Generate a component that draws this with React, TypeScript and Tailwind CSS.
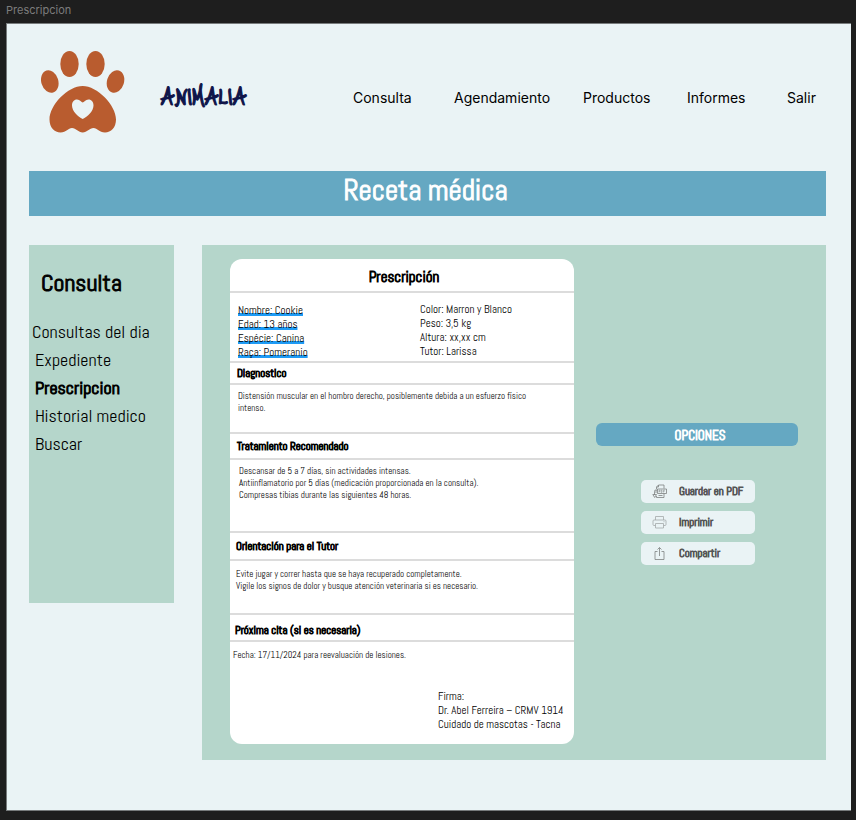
import type { ReactNode } from "react";

const navLinks = ["Consulta", "Agendamiento", "Productos", "Informes", "Salir"];

const menu = ["Consultas del dia", "Expediente", "Prescripcion", "Historial medico", "Buscar"];

const petInfo = ["Nombre: Cookie", "Edad: 13 años", "Espécie: Canina", "Raça: Pomeranio"];
const petDetails = ["Color: Marron y Blanco", "Peso: 3,5 kg", "Altura: xx,xx cm", "Tutor: Larissa"];

function PawLogo() {
  return (
    <svg viewBox="0 0 84 82" className="h-[82px] w-[84px] shrink-0" role="img" aria-label="Animalia">
      <g fill="#b95c2f">
        <ellipse cx="28.500" cy="13" rx="9.2" ry="13" />
        <ellipse cx="54.500" cy="13" rx="9.200" ry="13" />
        <ellipse cx="8.800" cy="30.500" rx="8.500" ry="11.500" transform="rotate(-17 8.800 30.500)" />
        <ellipse cx="74.500" cy="30.500" rx="8.500" ry="11.500" transform="rotate(17 74.500 30.500)" />
        <path d="M41.700 35C56 35 75 54 75 68.500C75 76.500 70 81.500 64 81.500C58 81.500 56.500 77 52.500 77C48.500 77 46 81.500 41.700 81.500C37.400 81.500 35 77 31 77C27 77 25.500 81.500 19.500 81.500C13.500 81.500 8.500 76.500 8.500 68.500C8.500 54 27 35 41.700 35Z" />
      </g>
      <path
        fill="#eaf3f5"
        d="M41.700 68C37 66 31 60 31 54.500C31 51 33 48.500 36 48.500C39 48.500 40.500 51.500 41.700 51.500C43 51.500 44.500 48.500 47.500 48.500C50.500 48.500 52.500 51 52.500 54.500C52.500 60 46.500 66 41.700 68Z"
      />
    </svg>
  );
}

function PdfIcon() {
  return (
    <svg viewBox="0 0 15 15" className="size-[15px]" fill="none" stroke="#7d8182" strokeWidth="0.8" aria-hidden="true">
      <path d="M4.500 5V3L6.500 1H12V4.500M6.500 1V3H4.500M12 9.500V13.500H4.500V12" />
      <path d="M5.500 5H14.500V9.500H5.500Z" />
      <path d="M7 8.500V6.200H8V7.400H7M9.200 6.200V8.400H10V6.200ZM11.500 8.500V6.200H13M11.500 7.300H12.700" strokeWidth="0.5" />
      <path d="M5.500 6H3.500C2.500 6 2.500 7 2.500 8V11M0.800 10.500L2.700 13.500L4.500 10.500ZM4 6V9" />
      <path d="M6.500 11.500H10.500" />
    </svg>
  );
}

function PrinterIcon() {
  return (
    <svg viewBox="0 0 15 15" className="size-[15px]" fill="none" stroke="#a3a8a9" strokeWidth="0.8" strokeLinejoin="round" aria-hidden="true">
      <path d="M3.500 5V1.500H11.500V5" />
      <path d="M3.500 10.500H2C1.300 10.500 1 10 1 9.500V6C1 5.300 1.400 5 2 5H13C13.600 5 14 5.300 14 6V9.500C14 10 13.700 10.500 13 10.500H11.500" />
      <path d="M3.500 8.500H11.500V13H3.500ZM11.500 6.700H12.500" />
    </svg>
  );
}

function ShareIcon() {
  return (
    <svg viewBox="0 0 15 15" className="size-[15px]" fill="none" stroke="#7d8182" strokeWidth="0.8" aria-hidden="true">
      <path d="M5.500 5.500H3V13.500H12V5.500H9.500" />
      <path d="M7.500 10V1.700M5.500 3.500L7.500 1.500L9.500 3.500" />
    </svg>
  );
}

function SectionTitle({ children, className }: { children: ReactNode; className: string }) {
  return (
    <h3 className={`flex items-center border-b-2 border-[#dcdcdc] text-[11px] leading-[14px] [-webkit-text-stroke:0.9px_black] ${className}`}>
      {children}
    </h3>
  );
}

function SectionBody({ children, className }: { children: ReactNode; className: string }) {
  return <div className={`text-[9px] leading-[12px] text-black ${className}`}>{children}</div>;
}

function OptionButton({ icon, label }: { icon: ReactNode; label: string }) {
  return (
    <button
      type="button"
      className="flex h-[23px] w-[114px] items-center gap-3 rounded-[5px] bg-[#eaf3f5] pl-[11px] text-[11px] text-[#555] [-webkit-text-stroke:0.8px_#555]"
    >
      {icon}
      {label}
    </button>
  );
}

export default function App() {
  return (
    <div className="min-h-screen bg-[#1e1e1e] pr-[5px] pb-[10px] pl-[6px] font-['Abel','Roboto_Condensed',sans-serif] text-black">
      <p className="h-[23px] font-['Inter',sans-serif] text-[11px] leading-[21px] text-[#7c7c7c]">Prescripcion</p>

      <div className="border border-r-0 border-[#777b7c] bg-[#eaf3f5] pr-[25px] pb-[50px] pl-[22px]">
        <header className="flex h-[147px] items-center pb-[12px]">
          <a href="#inicio" className="flex items-center gap-9 pl-3">
            <PawLogo />
            <span className="w-[90px] pt-[6px] font-['Just_Me_Again_Down_Here',cursive] text-[29px] leading-[36px] text-[#0f1449] [-webkit-text-stroke:1.2px_#0f1449]">
              ANIMALIA
            </span>
          </a>
          <nav className="ml-auto grid w-[473px] grid-cols-[101fr_129fr_104fr_100fr_39fr] pt-[13px] font-['Inter',sans-serif] text-[14px] leading-[20px]">
            {navLinks.map((label) => (
              <a key={label} href={`#${label.toLowerCase()}`}>
                {label}
              </a>
            ))}
          </nav>
        </header>

        <h1 className="h-[45px] bg-[#65a8c2] pr-1 text-center text-[29px] leading-[39px] text-white [-webkit-text-stroke:1px_white]">
          Receta médica
        </h1>

        <div className="flex items-start gap-7 pt-[29px]">
          <aside className="min-h-[358px] w-[145px] shrink-0 bg-[#b5d6cb]">
            <h2 className="pt-[22px] pl-3 text-[24px] leading-[32px] [-webkit-text-stroke:1px_black]">Consulta</h2>
            <ul className="pt-[19px] text-[18px] leading-[28px]">
              {menu.map((label, i) => (
                <li key={label} className={i === 0 ? "pl-[3px]" : "pl-[6px]"}>
                  <a href="#menu" className={label === "Prescripcion" ? "[-webkit-text-stroke:1px_black]" : ""}>
                    {label}
                  </a>
                </li>
              ))}
            </ul>
          </aside>

          <main className="flex flex-1 items-start bg-[#b5d6cb] pt-[14px] pr-7 pb-4 pl-7">
            <article className="w-[344px] shrink-0 rounded-[12px] bg-white">
              <h2 className="h-[34px] border-b-2 border-[#dcdcdc] pl-1 text-center text-[15px] leading-[35px] [-webkit-text-stroke:0.9px_black]">
                Prescripción
              </h2>
              <div className="flex h-[70px] border-b-2 border-[#dcdcdc] pt-[9px] pl-2 text-[11px] leading-[14px]">
                <ul className="w-[182px] pt-px">
                  {petInfo.map((line) => (
                    <li key={line} className="underline decoration-[#1e9bf5] decoration-[3px] underline-offset-[-1px] [text-decoration-skip-ink:none]">
                      {line}
                    </li>
                  ))}
                </ul>
                <ul>
                  {petDetails.map((line) => (
                    <li key={line}>{line}</li>
                  ))}
                </ul>
              </div>
              <SectionTitle className="h-[22px] pl-[7px]">Diagnostico</SectionTitle>
              <SectionBody className="h-[49px] border-b-2 border-[#dcdcdc] pt-[5px] pr-5 pl-2">
                Distensión muscular en el hombro derecho, posiblemente debida a un esfuerzo físico intenso.
              </SectionBody>
              <SectionTitle className="h-[26px] pl-[7px]">Tratamiento Recomendado</SectionTitle>
              <SectionBody className="h-[73px] border-b-2 border-[#dcdcdc] pt-[5px] pl-[9px]">
                <p>Descansar de 5 a 7 días, sin actividades intensas.</p>
                <p>Antiinflamatorio por 5 días (medicación proporcionada en la consulta).</p>
                <p>Compresas tibias durante las siguientes 48 horas.</p>
              </SectionBody>
              <SectionTitle className="h-[28px] pl-[6px]">Orientación para el Tutor</SectionTitle>
              <SectionBody className="h-[54px] border-b-2 border-[#dcdcdc] pt-[7px] pl-[6px]">
                <p>Evite jugar y correr hasta que se haya recuperado completamente.</p>
                <p>Vigile los signos de dolor y busque atención veterinaria si es necesario.</p>
              </SectionBody>
              <SectionTitle className="h-[27px] pt-[5px] pl-[5px]">Próxima cita (si es necesaria)</SectionTitle>
              <SectionBody className="pt-[7px] pl-[3px]">
                <p>Fecha: 17/11/2024 para reevaluación de lesiones.</p>
              </SectionBody>
              <address className="pt-[28px] pb-[13px] pl-[208px] text-[11px] leading-[14px] not-italic">
                <p>Firma:</p>
                <p>Dr. Abel Ferreira – CRMV 1914</p>
                <p>Cuidado de mascotas - Tacna</p>
              </address>
            </article>

            <section className="flex flex-1 flex-col items-center pt-[164px] pl-[22px]">
              <h2 className="h-[23px] w-full rounded-[6px] bg-[#65a8c2] pl-[6px] text-center text-[13px] leading-[25px] text-white [-webkit-text-stroke:0.9px_white]">
                OPCIONES
              </h2>
              <div className="flex flex-col gap-2 pt-[34px] pl-[2px]">
                <OptionButton icon={<PdfIcon />} label="Guardar en PDF" />
                <OptionButton icon={<PrinterIcon />} label="Imprimir" />
                <OptionButton icon={<ShareIcon />} label="Compartir" />
              </div>
            </section>
          </main>
        </div>
      </div>
    </div>
  );
}
